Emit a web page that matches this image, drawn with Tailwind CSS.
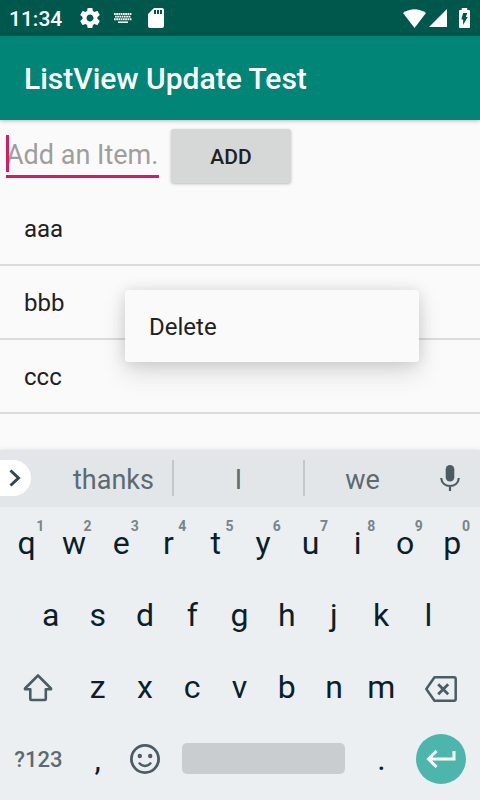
<!DOCTYPE html>
<html lang="en">
<head>
<meta charset="utf-8">
<meta name="viewport" content="width=device-width, initial-scale=1">
<title>ListView Update Test</title>
<script src="https://cdn.jsdelivr.net/npm/@tailwindcss/browser@4"></script>
</head>
<body class="flex min-h-screen flex-col bg-[#fafafa] font-['Roboto','Liberation_Sans',sans-serif] text-[#212121]">

<!-- Status bar -->
<div class="flex h-9 items-center bg-[#00574b] pr-[10px] pl-[9px] text-white">
  <span class="pt-px text-[21px] leading-6 font-medium">11:34</span>
  <svg class="ml-[18px] size-[20px]" viewBox="2 2 20 20" fill="currentColor" aria-hidden="true"><path d="M19.43 12.98c.04-.32.07-.64.07-.98s-.03-.66-.07-.98l2.11-1.65c.19-.15.24-.42.12-.64l-2-3.46c-.12-.22-.39-.3-.61-.22l-2.49 1c-.52-.4-1.08-.73-1.69-.98l-.38-2.65C14.46 2.18 14.25 2 14 2h-4c-.25 0-.46.18-.49.42l-.38 2.65c-.61.25-1.17.59-1.69.98l-2.49-1c-.23-.09-.49 0-.61.22l-2 3.46c-.13.22-.07.49.12.64l2.11 1.65c-.04.32-.07.65-.07.98s.03.66.07.98l-2.11 1.65c-.19.15-.24.42-.12.64l2 3.46c.12.22.39.3.61.22l2.49-1c.52.4 1.08.73 1.69.98l.38 2.65c.03.24.24.42.49.42h4c.25 0 .46-.18.49-.42l.38-2.65c.61-.25 1.17-.59 1.69-.98l2.49 1c.23.09.49 0 .61-.22l2-3.46c.12-.22.07-.49-.12-.64l-2.11-1.65zM12 15.500c-1.930 0-3.500-1.570-3.500-3.500s1.570-3.500 3.500-3.500 3.500 1.570 3.500 3.500-1.570 3.500-3.500 3.500z"/></svg>
  <svg class="ml-[13px] h-[10px] w-5" viewBox="0 0 20 10" stroke="currentColor" fill="none" aria-hidden="true"><path d="M1 1h18M1 6.200h18" stroke-width="1.900" stroke-dasharray="1.700 .55"/><path d="M2 3.600h16" stroke-width="1.800" stroke-dasharray="1.700 .55"/><path d="M5 9.200h10" stroke-width="1.500"/></svg>
  <svg class="ml-[15px] h-5 w-4" viewBox="4 2 16 20" fill="currentColor" aria-hidden="true"><path d="M18 2h-8L4.020 8 4 20c0 1.100.9 2 2 2h12c1.100 0 2-.9 2-2V4c0-1.100-.9-2-2-2zm-6 6h-2V4h2v4zm3 0h-2V4h2v4zm3 0h-2V4h2v4z"/></svg>
  <svg class="ml-auto h-[19px] w-[23px]" viewBox="0 0 23 19" fill="currentColor" aria-hidden="true"><path d="M0 4Q11.500-3.500 23 4L11.500 19z"/></svg>
  <svg class="ml-[3px] size-[18px]" viewBox="0 0 19 19" fill="currentColor" aria-hidden="true"><path d="M0 19 19 0v19z"/></svg>
  <svg class="ml-3 h-5 w-[11px]" viewBox="0 0 12 20" preserveAspectRatio="none" aria-hidden="true"><path fill="currentColor" d="M3 0h6v2h2q1 0 1 1v16q0 1-1 1H1q-1 0-1-1V3q0-1 1-1h2z"/><path fill="#00574b" d="M4.500 5h4.500L7.500 9H9.500L4.500 17V11.500H2.500z"/></svg>
</div>

<!-- App bar -->
<header class="relative flex h-21 items-center bg-[#008577] px-6 pt-[2px] shadow-[0_1px_4px_rgba(0,0,0,0.25)]">
  <h1 class="text-[30px] leading-9 font-medium text-white">ListView Update Test</h1>
</header>

<main class="relative grow">
  <form class="flex h-18 items-start gap-3 px-[6px] pt-[9px]" onsubmit="return false">
    <div class="relative mt-[6px] border-b-3 border-[#d81b60]">
      <input type="text" aria-label="Add an item" placeholder="Add an Item." class="block h-10 w-[153px] bg-transparent text-[27px] leading-10 outline-none placeholder:text-[#9e9e9e] placeholder:opacity-100">
      <span class="absolute top-0 left-0 h-[37px] w-[3px] bg-[#d81b60]"></span>
    </div>
    <button type="submit" class="h-[54px] w-30 rounded-[3px] bg-[#d6d7d7] pt-[3px] text-[21px] font-medium shadow-[0_1px_3px_rgba(0,0,0,0.25)]">ADD</button>
  </form>
  <ul class="text-2xl">
    <li class="flex h-[74px] items-center border-b-2 border-[#dbdbdb] px-6 pt-[2px]">aaa</li>
    <li class="flex h-[74px] items-center border-b-2 border-[#dbdbdb] px-6 pt-[2px]">bbb</li>
    <li class="flex h-[74px] items-center border-b-2 border-[#dbdbdb] px-6 pt-[2px]">ccc</li>
  </ul>
  <div role="menu" class="absolute top-[170px] left-[125px] w-[294px] rounded-[3px] bg-[#fafafa] shadow-[0_10px_24px_rgba(0,0,0,0.14),0_0_14px_rgba(0,0,0,0.1)]">
    <button type="button" role="menuitem" class="h-18 w-full px-6 pt-[2px] text-left text-2xl">Delete</button>
  </div>
</main>

<!-- Keyboard -->
<section aria-label="Keyboard" class="relative bg-[#ebeff2] pb-[6px] text-[32px] text-[#0a1f29] shadow-[0_-1px_4px_rgba(0,0,0,0.08)]">
  <div class="grid h-[57px] grid-cols-[55fr_119fr_131fr_115fr_60fr] items-center bg-[#e3e6e9] pb-px text-[27px] text-[#5c6a71]">
    <button type="button" aria-label="More" class="flex h-9 w-[31px] items-center rounded-r-full bg-white pl-[9px] text-[#36474f]">
      <svg class="h-[18px] w-3" viewBox="0 0 12 18" fill="none" stroke="currentColor" stroke-width="3" aria-hidden="true"><path d="m1.500 1.500 8 7.500-8 7.500"/></svg>
    </button>
    <button type="button" class="h-9 border-r-2 border-[#c3c7ca] pt-[2px] leading-9">thanks</button>
    <button type="button" class="h-9 border-r-2 border-[#c3c7ca] pt-[2px] leading-9">I</button>
    <button type="button" class="h-9 pt-[2px] leading-9">we</button>
    <button type="button" aria-label="Voice input" class="flex justify-center text-[#4c5c64]">
      <svg class="h-[26px] w-5" viewBox="0 0 20 26" aria-hidden="true"><rect x="5.700" y="0" width="8.600" height="16.500" rx="4.300" fill="currentColor"/><path d="M1.200 13c.4 5.300 4.300 8 8.800 8s8.400-2.700 8.800-8M10 21v5" fill="none" stroke="currentColor" stroke-width="2.200"/></svg>
    </button>
  </div>

  <div class="grid h-18 grid-cols-10 pr-1 pl-[3px] [&>button]:relative [&_sup]:absolute [&_sup]:top-3 [&_sup]:right-[6px] [&_sup]:text-sm [&_sup]:leading-[14px] [&_sup]:font-bold [&_sup]:text-[#77848a]">
    <button type="button">q<sup>1</sup></button>
    <button type="button">w<sup>2</sup></button>
    <button type="button">e<sup>3</sup></button>
    <button type="button">r<sup>4</sup></button>
    <button type="button">t<sup>5</sup></button>
    <button type="button">y<sup>6</sup></button>
    <button type="button">u<sup>7</sup></button>
    <button type="button">i<sup>8</sup></button>
    <button type="button">o<sup>9</sup></button>
    <button type="button">p<sup>0</sup></button>
  </div>

  <div class="grid h-18 grid-cols-9 pr-7 pl-[27px]">
    <button type="button">a</button>
    <button type="button">s</button>
    <button type="button">d</button>
    <button type="button">f</button>
    <button type="button">g</button>
    <button type="button">h</button>
    <button type="button">j</button>
    <button type="button">k</button>
    <button type="button">l</button>
  </div>

  <div class="grid h-18 grid-cols-[3fr_2fr_2fr_2fr_2fr_2fr_2fr_2fr_3fr] pr-1 pl-[3px]">
    <button type="button" aria-label="Shift" class="flex items-center justify-center pt-[2px] text-[#4c5c64]">
      <svg class="size-[30px]" viewBox="0 0 30 30" fill="none" stroke="currentColor" stroke-width="2.600" stroke-linejoin="round" aria-hidden="true"><path d="M15 2.500 28 15.500v.8H22.800v9.700q0 1-1 1H8.300q-1 0-1-1v-9.700H2v-.8z"/></svg>
    </button>
    <button type="button">z</button>
    <button type="button">x</button>
    <button type="button">c</button>
    <button type="button">v</button>
    <button type="button">b</button>
    <button type="button">n</button>
    <button type="button">m</button>
    <button type="button" aria-label="Backspace" class="flex items-center justify-center pt-1 text-[#4c5c64]">
      <svg class="h-[26px] w-8" viewBox="0 0 32 26" fill="none" stroke="currentColor" stroke-width="2.500" stroke-linejoin="round" aria-hidden="true"><path d="M9.500 1.300H29q1.700 0 1.700 1.700v20q0 1.700-1.700 1.700H9.500L1.300 13z"/><path d="m13.200 8.200 10 10m0-10-10 10" stroke-width="2.800"/></svg>
    </button>
  </div>

  <div class="grid h-[71px] grid-cols-[3fr_2fr_2fr_8fr_2fr_3fr] items-center pr-1 pl-[3px]">
    <button type="button" class="pt-[2px] text-[22px] font-medium text-[#5c6a71]">?123</button>
    <button type="button">,</button>
    <button type="button" aria-label="Emoji" class="flex justify-center text-[#4c5c64]">
      <svg class="size-[30px]" viewBox="0 0 30 30" aria-hidden="true"><circle cx="15" cy="15" r="13.600" fill="none" stroke="currentColor" stroke-width="2.800"/><circle cx="9.800" cy="12" r="2.200" fill="currentColor"/><circle cx="20.200" cy="12" r="2.200" fill="currentColor"/><path d="M9 18.500q2 3.500 6 3.500t6-3.500" fill="none" stroke="currentColor" stroke-width="2.400"/></svg>
    </button>
    <button type="button" aria-label="Space" class="mx-[13px] h-[31px] rounded-[5px] bg-[#c9cdd0]"></button>
    <button type="button">.</button>
    <button type="button" aria-label="Enter" class="flex size-[50px] items-center justify-center justify-self-center rounded-full bg-[#4db6ac] text-white">
      <svg class="h-[18px] w-[30px]" viewBox="0 0 30 18" fill="none" stroke="currentColor" stroke-width="3" aria-hidden="true"><path d="M28 1v8H2.500M10.500 1l-8 8 8 8"/></svg>
    </button>
  </div>
</section>
</body>
</html>
